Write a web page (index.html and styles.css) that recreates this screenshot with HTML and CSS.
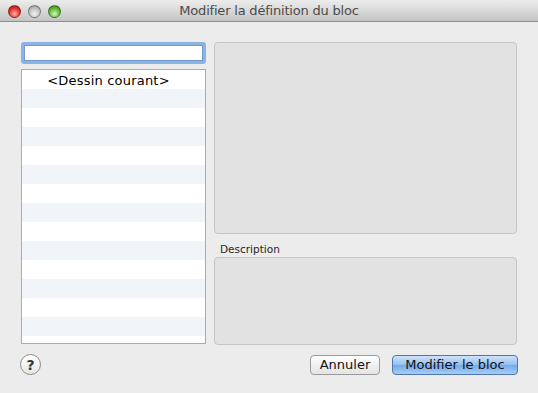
FILE: index.html
```html
<!DOCTYPE html>
<html>
<head>
	<meta charset="utf-8">
	<title>Modifier la définition du bloc</title>
	<link rel="stylesheet" href="styles.css">
</head>
<body>
	<div class="window">
		<header class="titlebar">
			<div class="lights">
				<span class="light red"></span>
				<span class="light gray"></span>
				<span class="light green"></span>
			</div>
			<h1>Modifier la définition du bloc</h1>
		</header>

		<main class="content">
			<section class="left">
				<input class="search" type="text">
				<ul class="list">
					<li>&lt;Dessin courant&gt;</li>
					<li></li><li></li><li></li><li></li><li></li><li></li><li></li>
					<li></li><li></li><li></li><li></li><li></li><li></li><li></li>
				</ul>
			</section>
			<section class="right">
				<div class="preview"></div>
				<label class="desc-label">Description</label>
				<div class="desc"></div>
			</section>
		</main>

		<footer class="footer">
			<button class="help">?</button>
			<div class="actions">
				<button class="btn cancel">Annuler</button>
				<button class="btn primary">Modifier le bloc</button>
			</div>
		</footer>
	</div>
</body>
</html>
```

FILE: styles.css
```css
body { margin: 0; background: #ececec; font-family: 'DejaVu Sans', 'Liberation Sans', sans-serif; }

.window { width: 538px; height: 393px; display: flex; flex-direction: column; background: #ececec; overflow: hidden; }

.titlebar {
	height: 21px; border-bottom: 1px solid #8e8e8e; position: relative;
	background: linear-gradient(#ececec, #d9d9d9 50%, #c4c4c4);
	display: flex; align-items: center; justify-content: center;
}
.titlebar h1 { margin: 0; font-size: 13px; font-weight: normal; color: #4a4a4a; letter-spacing: -0.2px; }
.lights { position: absolute; left: 8px; top: 5px; display: flex; gap: 7px; }
.light { width: 13px; height: 13px; border-radius: 50%; box-sizing: border-box; border: 1px solid rgba(0,0,0,0.35); }
.light.red { background: radial-gradient(circle at 50% 70%, #ffb3a8, #e5322b 55%, #a21612); }
.light.gray { background: radial-gradient(circle at 50% 70%, #f2f2f2, #c2c2c2 55%, #8f8f8f); }
.light.green { background: radial-gradient(circle at 50% 70%, #d5f7b7, #5fba3a 55%, #2f7d18); }

.content { display: flex; gap: 8px; padding: 20px 21px 0; }

.left { width: 185px; display: flex; flex-direction: column; }
.search {
	height: 22px; margin: 0; box-sizing: border-box; border: 3px solid #8cb3e2; border-radius: 3px;
	box-shadow: 0 0 0 1px #6f9bd2 inset; background: #fff; outline: none;
}
.list {
	list-style: none; margin: 5px 0 0; padding: 0; height: 273px; overflow: hidden;
	border: 1px solid #acacac; background: #fff;
}
.list li { height: 19px; line-height: 19px; font-size: 13px; color: #000; text-align: center; padding-right: 10px; overflow: hidden; }
.list li:first-child { line-height: 22px; letter-spacing: 0.2px; }
.list li:nth-child(even) { background: #f1f4f9; }

.right { flex: 1; display: flex; flex-direction: column; }
.preview, .desc { background: #e2e2e2; border: 1px solid #c6c6c6; border-radius: 4px; }
.preview { height: 190px; }
.desc-label { font-size: 10.5px; color: #262626; padding: 9px 0 2px 6px; }
.desc { height: 86px; }

.footer { display: flex; align-items: center; justify-content: space-between; padding: 9px 20px 0 20px; }
.help {
	width: 21px; height: 21px; border-radius: 50%; padding: 0; border: 1px solid #8b8b8b;
	background: linear-gradient(#ffffff, #e6e6e6); font: bold 14px 'DejaVu Sans', sans-serif; color: #333;
}
.actions { display: flex; gap: 12px; }
.btn {
	height: 20px; padding: 0; font: 13px 'DejaVu Sans', sans-serif; color: #111;
	border: 1px solid #9a9a9a; border-radius: 4px; background: linear-gradient(#ffffff, #f0f0f0 50%, #e4e4e4);
}
.btn.cancel { width: 70px; }
.btn.primary {
	width: 126px; border-color: #4f76ad;
	background: linear-gradient(#cfe3fb, #92bff1 50%, #73aaeb 51%, #a6cdf7);
}
```
